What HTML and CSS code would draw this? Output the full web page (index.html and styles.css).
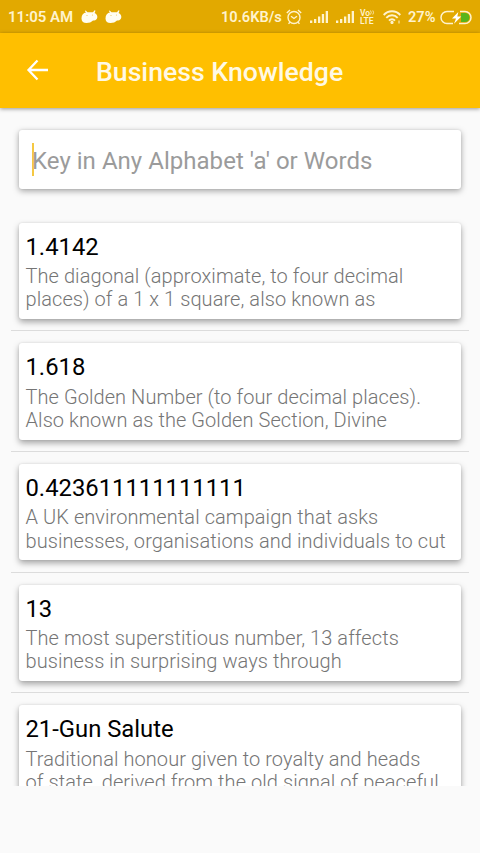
FILE: index.html
```html
<!DOCTYPE html>
<html lang="en">
<head>
  <meta charset="UTF-8">
  <meta name="viewport" content="width=device-width, initial-scale=1.0">
  <title>Business Knowledge</title>
  <link rel="stylesheet" href="styles.css">
</head>
<body>
  <!-- Status Bar -->
  <div class="status-bar">
    <span class="time">11:05 AM</span>
    <svg class="droid" width="17" height="14" viewBox="0 0 17 14">
      <path d="M.5 8.500C.5 5 2.500 3 5 2.600L3.800 1l.9-.6 1.800 1.900 5.500-.1L13.600.2l.9.6-.9 2.100C16 4 17 6.500 16 8.500c-.8 1.700-2.500 2-4 2-1.500 1.700-4 2.500-6.500 2.500-3 0-5-1.500-5-4.500z" fill="#fffdf2"/>
      <circle cx="6" cy="5.500" r=".6" fill="#edc75a"/>
      <circle cx="11.500" cy="5" r=".6" fill="#edc75a"/>
    </svg>
    <svg class="droid" width="17" height="14" viewBox="0 0 17 14">
      <path d="M.5 8.500C.5 5 2.500 3 5 2.600L3.800 1l.9-.6 1.800 1.900 5.500-.1L13.600.2l.9.6-.9 2.100C16 4 17 6.500 16 8.500c-.8 1.700-2.500 2-4 2-1.500 1.700-4 2.500-6.500 2.500-3 0-5-1.500-5-4.500z" fill="#fffdf2"/>
      <circle cx="6" cy="5.500" r=".6" fill="#edc75a"/>
      <circle cx="11.500" cy="5" r=".6" fill="#edc75a"/>
    </svg>
    <span class="speed">10.6KB/s</span>
    <svg class="alarm" width="16" height="16" viewBox="0 0 16 16" fill="none" stroke="#fff3cd" stroke-width="1.400">
      <circle cx="8" cy="8.500" r="6"/>
      <path d="M5 7.300L8 9.500l3-2.200M.8 4l3.200-3M15.200 4L12 1M4 13.200l-1.500 1.500M12 13.200l1.500 1.500"/>
    </svg>
    <svg class="signal" width="18" height="14" viewBox="0 0 18 14" fill="#fff3cd">
      <path d="M0 10.500h2.300V13H0zM4 9h2.300v4H4zM8 6.500h2.300V13H8zM11.800 4h2.300v9h-2.300zM15.700 1H18v12h-2.300z"/>
    </svg>
    <svg class="signal second" width="18" height="14" viewBox="0 0 18 14" fill="#fff3cd">
      <path d="M0 10.500h2.300V13H0zM4 9h2.300v4H4zM8 6.500h2.300V13H8zM11.800 4h2.300v9h-2.300zM15.700 1H18v12h-2.300z"/>
    </svg>
    <span class="volte"><span>Vo<svg width="5" height="5" viewBox="0 0 5 5" fill="none" stroke="#fff3cd" stroke-width=".8"><path d="M.5.5q1.500 2 0 4M2.800.5q1.500 2 0 4"/></svg></span><span>LTE</span></span>
    <svg class="wifi" width="18" height="14" viewBox="0 0 18 14" fill="none" stroke="#fff3cd" stroke-width="1.900">
      <path d="M.7 5C5.300 0 12.700 0 17.300 5M3.300 7.900c3.200-3.500 8.200-3.500 11.400 0M6 10.600c1.800-1.900 4.200-1.900 6 0"/>
      <circle cx="9" cy="12.400" r=".7" fill="#fff3cd"/>
      <path d="M16 10.500v3" stroke-width="1"/>
    </svg>
    <span class="percent">27%</span>
    <svg class="battery" width="32" height="15" viewBox="0 0 32 15">
      <path d="M21 3h4a4.500 4.500 0 0 1 0 9h-4z" fill="#58b51b"/>
      <path d="M14 1.500H7a6 6 0 0 0 0 12h6M20 1.500h5a6 6 0 0 1 0 12h-6" fill="none" stroke="#fff3cd" stroke-width="1.500"/>
      <path d="M18.300 2L12 8.500h4l-2 5.300 7.300-7.300h-4z" fill="#fff"/>
    </svg>
  </div>

  <!-- Toolbar -->
  <header class="toolbar">
    <svg class="back" width="22" height="22" viewBox="0 0 22 22" fill="none" stroke="#fff" stroke-width="2.300">
      <path d="M11.500 1.500L2.500 11l9 9.500M2.500 11h19.500"/>
    </svg>
    <h1>Business Knowledge</h1>
  </header>

  <main>
    <div class="search">
      <span class="cursor"></span>
      <span class="hint">Key in Any Alphabet 'a' or Words</span>
    </div>

    <!-- Terms List -->
    <div class="list">
      <div class="item">
        <div class="card">
          <h2>1.4142</h2>
          <p>The diagonal (approximate, to four decimal<br>places) of a 1 x 1 square, also known as</p>
        </div>
      </div>
      <div class="item">
        <div class="card">
          <h2>1.618</h2>
          <p>The Golden Number (to four decimal places).<br>Also known as the Golden Section, Divine</p>
        </div>
      </div>
      <div class="item">
        <div class="card">
          <h2>0.423611111111111</h2>
          <p>A UK environmental campaign that asks<br>businesses, organisations and individuals to cut</p>
        </div>
      </div>
      <div class="item">
        <div class="card">
          <h2>13</h2>
          <p>The most superstitious number, 13 affects<br>business in surprising ways through</p>
        </div>
      </div>
      <div class="item">
        <div class="card">
          <h2>21-Gun Salute</h2>
          <p>Traditional honour given to royalty and heads<br>of state, derived from the old signal of peaceful</p>
        </div>
      </div>
    </div>
  </main>
</body>
</html>
```
FILE: styles.css
```css
* {
  box-sizing: border-box;
}

body {
  font-family: Roboto, "Liberation Sans", sans-serif;
  margin: 0;
  height: 853px;
  overflow: hidden;
  background-color: #fafafa;
}

svg {
  display: block;
  flex: none;
}

.status-bar {
  display: flex;
  align-items: center;
  height: 33px;
  padding: 1px 8px 0 8px;
  background-color: #e2a900;
  color: #fff3cd;
  font-size: 15px;
  font-weight: 600;
  white-space: nowrap;
}

.time {
  width: 73px;
}

.droid {
  margin-right: 7px;
}

.speed {
  width: 65px;
  margin-left: 92px;
  font-size: 14.6px;
}

.alarm {
  margin-right: 8px;
}

.signal.second {
  margin-left: 8px;
}

.volte {
  display: flex;
  flex-direction: column;
  width: 17px;
  margin: 0 6px;
  font-size: 8.5px;
  line-height: 8px;
}

.volte svg {
  display: inline-block;
  vertical-align: 1px;
}

.percent {
  width: 32px;
  margin-left: 7px;
  font-size: 14.6px;
}

.toolbar {
  display: flex;
  align-items: center;
  height: 75px;
  padding: 2px 26px 0;
  background-color: #ffbf00;
  box-shadow: 0 1px 4px rgba(0, 0, 0, 0.4);
}

.back {
  margin-top: -3px;
}

.toolbar h1 {
  margin: 0 0 0 48px;
  color: #fff9e5;
  font-size: 26.67px;
  font-weight: 500;
}

.search {
  display: flex;
  align-items: center;
  height: 59px;
  margin: 22px 19px 0;
  padding: 0 13px;
  background-color: #fff;
  border-radius: 3px;
  box-shadow: 0 2px 6px rgba(0, 0, 0, 0.35), 0 0 2px rgba(0, 0, 0, 0.1);
}

.cursor {
  width: 2px;
  height: 33px;
  background-color: #f5c842;
}

.hint {
  margin-left: -2px;
  padding-top: 3px;
  color: #9b9b9b;
  font-size: 24px;
  letter-spacing: 0.03px;
}

.list {
  height: 576px;
  margin-top: 21px;
  padding: 0 11px;
  overflow: hidden;
}

.item {
  height: 120.7px;
  padding: 12px 8px;
  border-bottom: 1px solid #dcdcdc;
}

.item:first-child {
  height: 121.2px;
  padding-top: 12.5px;
}

.card {
  height: 96.4px;
  padding: 9px 6.5px 0;
  background-color: #fff;
  border-radius: 3px;
  box-shadow: 0 3px 6px rgba(0, 0, 0, 0.35), 0 0 2px rgba(0, 0, 0, 0.1);
}

.card h2 {
  margin: 0;
  color: #000;
  font-size: 23.8px;
  font-weight: 400;
  line-height: 30px;
}

.card p {
  margin: 3.5px 0 0;
  color: #757575;
  font-size: 20px;
  font-weight: 300;
  line-height: 23.4px;
  letter-spacing: 0.07px;
  white-space: nowrap;
}
```
